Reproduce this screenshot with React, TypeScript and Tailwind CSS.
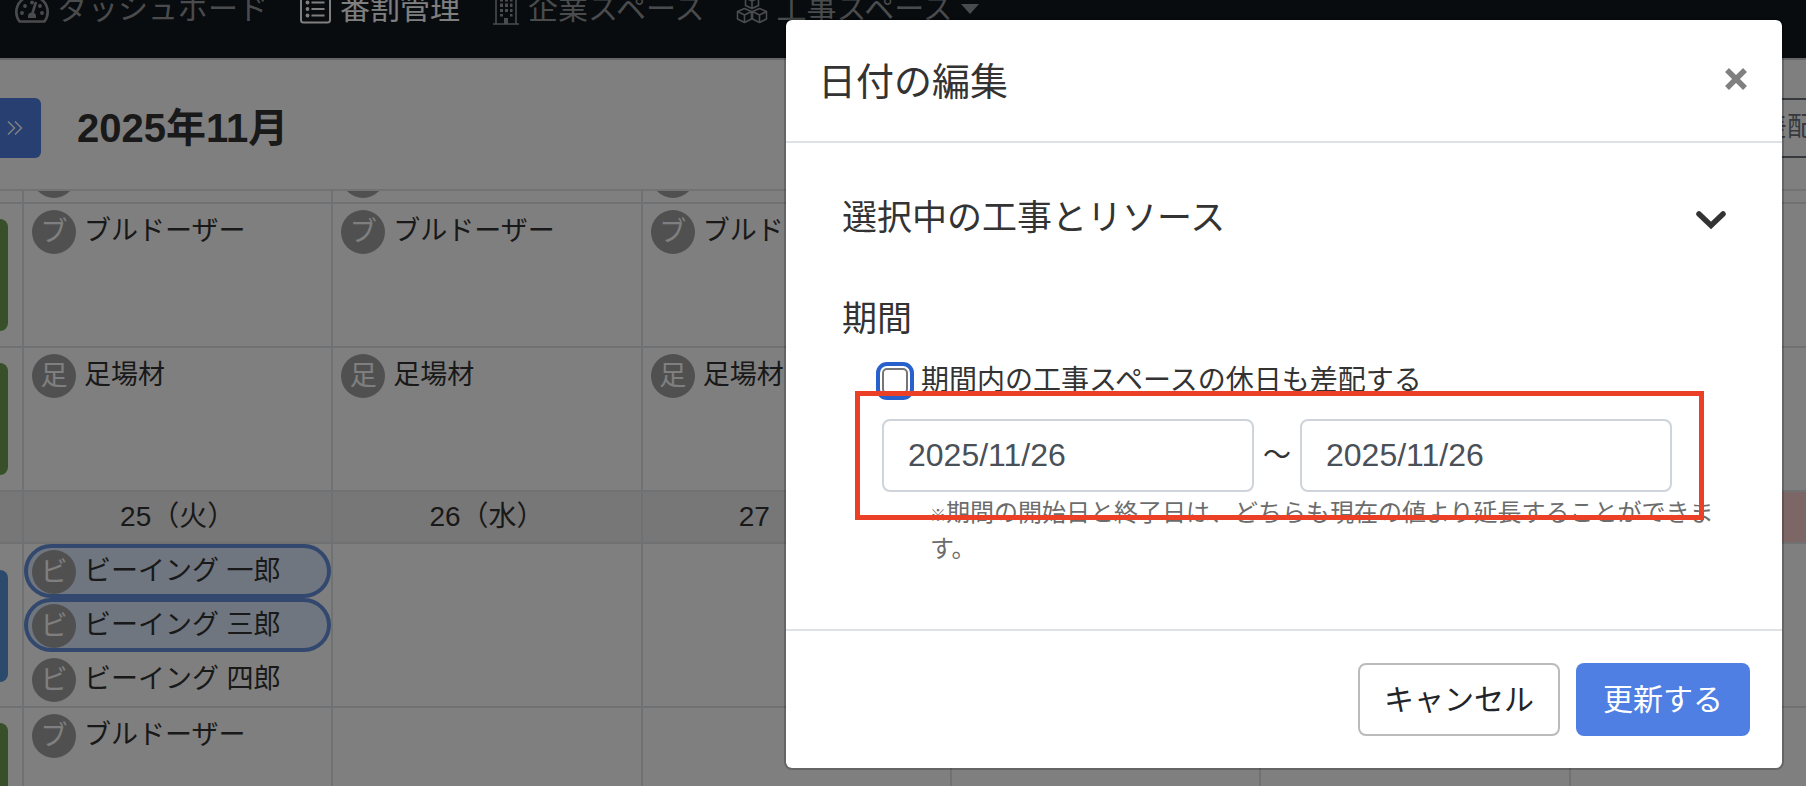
import type { ReactNode } from "react";

type Member = { name: string; selected?: boolean };
type Row = { bar: string; barInset: string; height: string; days: Member[][] };

const bulldozer: Member = { name: "ブルドーザー" };
const scaffold: Member = { name: "足場材" };

const WEEK_ONE: Row[] = [
  {
    bar: "bg-[#6ea052]",
    barInset: "pt-[15px]",
    height: "h-36",
    days: [[bulldozer], [bulldozer], [bulldozer], [], [], []],
  },
  {
    bar: "bg-[#6ea052]",
    barInset: "pt-[15px]",
    height: "h-36",
    days: [[scaffold], [scaffold], [scaffold], [], [], []],
  },
];

const WEEK_TWO: Row[] = [
  {
    bar: "bg-[#5894d6]",
    barInset: "pt-[26px]",
    height: "h-[164px]",
    days: [
      [
        { name: "ビーイング 一郎", selected: true },
        { name: "ビーイング 三郎", selected: true },
        { name: "ビーイング 四郎" },
      ],
      [],
      [],
      [],
      [],
      [],
    ],
  },
  {
    bar: "bg-[#6ea052]",
    barInset: "pt-[15px]",
    height: "h-36",
    days: [[bulldozer], [], [], [], [], []],
  },
];

const DAYS = ["25（火）", "26（水）", "27（木）", "", "", ""];

function GaugeIcon() {
  return (
    <svg width="36" height="32" viewBox="0 0 36 32" fill="none" stroke="currentColor" strokeWidth="2.6">
      <path d="M5.5 28.5A16 16 0 0 1 2.3 19 15.7 15.7 0 0 1 33.7 19a16 16 0 0 1-3.2 9.5Z" strokeLinejoin="round" />
      <g fill="currentColor" stroke="none">
        <circle cx="8" cy="20" r="1.9" />
        <circle cx="11" cy="13" r="1.9" />
        <circle cx="18" cy="9.5" r="1.9" />
        <circle cx="28" cy="20" r="1.9" />
        <circle cx="26" cy="13" r="1.9" />
        <path d="M14 23.500a4 4 0 0 1 8 0v1.500h-8Z" />
      </g>
      <path d="M18.5 20 22 9" />
    </svg>
  );
}

function ListIcon() {
  return (
    <svg width="32" height="32" viewBox="0 0 32 32" fill="none" stroke="currentColor" strokeWidth="2">
      <rect x="1" y="1.500" width="29" height="28" rx="2.5" />
      <path d="M11.500 9.500h13M11.500 16h13M11.500 22.500h13" />
      <g fill="currentColor" stroke="none">
        <circle cx="7.500" cy="9.500" r="1.9" />
        <circle cx="7.500" cy="16" r="1.9" />
        <circle cx="7.500" cy="22.500" r="1.9" />
      </g>
    </svg>
  );
}

function BuildingIcon() {
  return (
    <svg width="28" height="34" viewBox="0 0 28 34" fill="none" stroke="currentColor">
      <path d="M1 32h26M4 32V2h20v30" strokeWidth="1.6" />
      <g fill="currentColor" stroke="none">
        <path d="M12 26h4v6h-4z" />
        <path d="M8 6h3v3.500H8zM13 6h3v3.500h-3zM18 6h2.500v3.500H18z" />
        <path d="M8 11.500h3V15H8zM13 11.500h3V15h-3zM18 11.500h2.500V15H18z" />
        <path d="M8 17h3v3H8zM13 17h3v3h-3zM18 17h2.500v3H18z" />
        <path d="M8 22h3v2.500H8zM18 22h2.500v2.500H18z" />
      </g>
    </svg>
  );
}

function CubesIcon() {
  return (
    <svg
      width="32"
      height="32"
      viewBox="0 0 32 32"
      fill="none"
      stroke="currentColor"
      strokeWidth="1.6"
      strokeLinejoin="round"
    >
      <path d="m16 2 6.500 3v7.500L16 15.500l-6.500-3V5Zm0 13.500V8l6.500-3M16 8 9.500 5" />
      <path d="m8.500 15.500 7 3V26l-7 3.500-7-3.500v-7.500Zm0 14V22l7-3.500M8.500 22l-7-3.500" />
      <path d="m23.500 15.500 7 3V26l-7 3.500-7-3.500v-7.500Zm0 14V22l7-3.500m-7 3.500-7-3.500" />
    </svg>
  );
}

function NavLink({ icon, active, children }: { icon: ReactNode; active?: boolean; children: ReactNode }) {
  return (
    <a
      href="#"
      className={
        active
          ? "flex shrink-0 items-center gap-2 leading-8 text-white"
          : "flex shrink-0 items-center gap-2 leading-8 text-[#94969a]"
      }
    >
      {icon}
      <span>{children}</span>
    </a>
  );
}

function MemberItem({ name, selected }: Member) {
  return (
    <div
      className={
        selected
          ? "flex h-[54px] items-start rounded-full border-4 border-[#6490dc] bg-[#dfecff] pt-[2px] pl-1"
          : "flex h-[54px] items-start pt-[6px] pl-2"
      }
    >
      <span className="flex size-11 shrink-0 items-center justify-center rounded-full bg-[#a0a0a0] leading-10 text-white">
        {name.charAt(0)}
      </span>
      <span className="ml-2 leading-[43px] whitespace-nowrap">{name}</span>
    </div>
  );
}

function ScheduleRow({ row }: { row: Row }) {
  return (
    <tr className={row.height}>
      <td className={`border-r-2 border-b-2 border-[#dee2e6] p-0 align-top ${row.barInset}`}>
        <div className={`h-28 w-2 rounded-r-lg ${row.bar}`} />
      </td>
      {row.days.map((members, i) => (
        <td key={i} className="border-r-2 border-b-2 border-[#dee2e6] p-0 align-top">
          {members.map((m) => (
            <MemberItem key={m.name} {...m} />
          ))}
        </td>
      ))}
    </tr>
  );
}

function Schedule() {
  return (
    <table className="w-[calc(100%+74px)] table-fixed border-separate border-spacing-0 text-[27px]">
      <colgroup>
        <col className="w-6" />
        <col span={6} />
      </colgroup>
      <tbody>
        <tr className="h-[13px]">
          <td className="border-r-2 border-b-2 border-[#dee2e6] p-0" />
          {DAYS.map((_, i) => (
            <td key={i} className="border-r-2 border-b-2 border-[#dee2e6] p-0">
              <div className="flex h-[11px] items-end overflow-hidden pb-1 pl-2">
                {i < 3 && <span className="size-11 shrink-0 rounded-full bg-[#a0a0a0]" />}
              </div>
            </td>
          ))}
        </tr>
        {WEEK_ONE.map((row, i) => (
          <ScheduleRow key={i} row={row} />
        ))}
        <tr className="h-[52px] bg-[#efefef] text-[28px]">
          <td className="border-r-2 border-b-2 border-[#dee2e6] p-0" />
          {DAYS.map((day, i) => (
            <th
              key={i}
              scope="col"
              className={
                i === 5
                  ? "border-r-2 border-b-2 border-[#dee2e6] bg-[#fbcccc] p-0"
                  : "border-r-2 border-b-2 border-[#dee2e6] p-0 text-center leading-10 font-normal"
              }
            >
              {day}
            </th>
          ))}
        </tr>
        {WEEK_TWO.map((row, i) => (
          <ScheduleRow key={i} row={row} />
        ))}
      </tbody>
    </table>
  );
}

function DateDialog() {
  return (
    <section
      role="dialog"
      aria-labelledby="dialog-title"
      className="w-[1000px] max-w-full self-start rounded-lg border-2 border-black/20 bg-white bg-clip-padding"
    >
      <header className="flex h-[123px] items-center justify-between border-b-2 border-[#dee2e6] pr-6 pl-8">
        <h1 id="dialog-title" className="pt-[2px] text-[38px] leading-[56px]">
          日付の編集
        </h1>
        <button type="button" aria-label="閉じる" className="flex size-11 items-center justify-center pb-1 text-[#808080]">
          <svg width="24" height="24" viewBox="0 0 24 24" stroke="currentColor" strokeWidth="5.5">
            <path d="m3 3 18 18m0-18L3 21" />
          </svg>
        </button>
      </header>

      <div className="px-14 pt-[50px] pb-[62px]">
        <button type="button" aria-expanded="false" className="flex w-full items-center justify-between">
          <span className="text-[35px] leading-[50px]">選択中の工事とリソース</span>
          <svg
            className="mt-1"
            width="30"
            height="20"
            viewBox="0 0 30 20"
            fill="none"
            stroke="currentColor"
            strokeWidth="5.5"
            strokeLinecap="round"
          >
            <path d="m3 4 12 11.500L27 4" />
          </svg>
        </button>

        <h2 className="mt-[51px] text-[35px] leading-[50px]">期間</h2>

        <div className="mt-4 flex items-center gap-[13px] pl-10 text-[28px] leading-[42px]">
          <input
            id="include-holidays"
            type="checkbox"
            className="size-[26px] shrink-0 appearance-none rounded-[5px] border-2 border-[#767676] bg-white outline-4 outline-offset-2 outline-[#2961cc]"
          />
          <label htmlFor="include-holidays">期間内の工事スペースの休日も差配する</label>
        </div>

        <div className="relative mt-[17px] flex items-center pr-[54px] pl-10 text-[32px]">
          <input
            type="text"
            aria-label="開始日"
            defaultValue="2025/11/26"
            className="h-[73px] min-w-0 flex-1 rounded-lg border-2 border-[#ced4da] px-6 text-[#495057]"
          />
          <span className="w-[46px] text-center text-[28px]">～</span>
          <input
            type="text"
            aria-label="終了日"
            defaultValue="2025/11/26"
            className="h-[73px] min-w-0 flex-1 rounded-lg border-2 border-[#ced4da] px-6 text-[#495057]"
          />
          <div className="pointer-events-none absolute -top-7 right-[22px] -bottom-7 left-[13px] border-[5px] border-[#eb4026]" />
        </div>

        <p className="mt-[3px] pl-[88px] text-[24px] leading-9 text-[#6c6c6c]">
          <span className="text-[16px] leading-none">※</span>期間の開始日と終了日は、どちらも現在の値より延長することができます。
        </p>
      </div>

      <footer className="flex justify-end gap-4 border-t-2 border-[#dee2e6] p-8 text-[30px]">
        <button type="button" className="h-[73px] rounded-lg border-2 border-[#bbbbbb] px-6 text-[#212529]">
          キャンセル
        </button>
        <button type="button" className="h-[73px] rounded-lg bg-[#507fe3] px-[27px] text-white">
          更新する
        </button>
      </footer>
    </section>
  );
}

export default function App() {
  return (
    <div className="relative h-screen overflow-hidden bg-white font-['Liberation_Sans','Noto_Sans_CJK_JP',sans-serif] text-[#333333]">
      <nav className="h-[60px] border-b-2 border-[#cccccc] bg-[#10181f]">
        <div className="flex h-[18px] items-center gap-8 pl-[14px] text-[30px]">
          <NavLink icon={<GaugeIcon />}>ダッシュボード</NavLink>
          <NavLink icon={<ListIcon />} active>
            番割管理
          </NavLink>
          <NavLink icon={<BuildingIcon />}>企業スペース</NavLink>
          <NavLink icon={<CubesIcon />}>
            <span className="flex items-center gap-2">
              工事スペース
              <svg width="18" height="10" viewBox="0 0 18 10" fill="currentColor">
                <path d="M0 0h18L9 10Z" />
              </svg>
            </span>
          </NavLink>
        </div>
      </nav>

      <div className="flex h-[131px] items-center justify-between border-b-2 border-[#e4e4e4] pt-[6px]">
        <div className="flex items-center gap-9">
          <button
            type="button"
            aria-label="次へ"
            className="flex h-[60px] w-[41px] items-center rounded-r-md bg-[#507fe3] pl-[7px] text-white"
          >
            <svg width="16" height="16" viewBox="0 0 16 16" fill="none" stroke="currentColor" strokeWidth="1.5">
              <path d="m1 1.500 6.500 6.500L1 14.500m7-13L14.500 8 8 14.500" />
            </svg>
          </button>
          <h2 className="text-[40px] leading-[60px] font-bold">2025年11月</h2>
        </div>
        <button
          type="button"
          className="-mr-2 h-[60px] w-[72px] rounded-l-md border-2 border-r-0 border-[#6c757d] text-right text-[27px] text-[#6c757d]"
        >
          差配
        </button>
      </div>

      <Schedule />

      <div className="absolute inset-0 flex justify-end bg-black/50 pt-[18px] pr-[22px]">
        <DateDialog />
      </div>
    </div>
  );
}
